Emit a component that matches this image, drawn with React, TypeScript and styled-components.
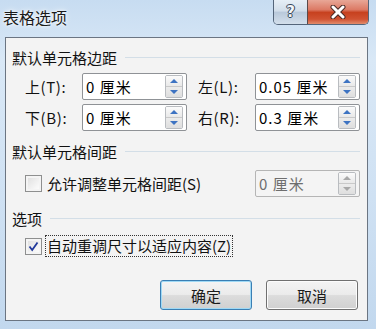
import styled, { createGlobalStyle } from 'styled-components';

const GlobalStyle = createGlobalStyle`
  html, body {
    margin: 0;
    padding: 0;
  }
  body {
    font-family: "Noto Sans CJK SC", "Noto Sans", sans-serif;
    background: #cfe0f2;
  }
`;

// ウィンドウ枠
const Window = styled.div`
  width: 376px;
  height: 329px;
  box-sizing: border-box;
  display: flex;
  flex-direction: column;
  background: linear-gradient(180deg, #c7dcf1 0%, #d9e8f6 18%, #cfe1f3 60%, #c2d8ee 100%);
`;

const TitleBar = styled.div`
  height: 37px;
  display: flex;
  align-items: flex-start;
  justify-content: space-between;
  padding-left: 3px;
  padding-right: 7px;
`;

const Title = styled.div`
  font-size: 16px;
  line-height: 34px;
  color: #1a1a1a;
  text-shadow: 0 0 6px rgba(255, 255, 255, 0.95), 0 0 3px #fff;
`;

const Caption = styled.div`
  display: flex;
  height: 25px;
  border: 1px solid #54657a;
  border-top: none;
  border-radius: 0 0 5px 5px;
  overflow: hidden;
  box-sizing: border-box;
`;

const CapButton = styled.div<{ close?: boolean }>`
  width: ${({ close }) => (close ? '60px' : '33px')};
  display: flex;
  align-items: center;
  justify-content: center;
  border-left: ${({ close }) => (close ? '1px solid #5a4a4a' : 'none')};
  background: ${({ close }) =>
    close
      ? 'linear-gradient(180deg, #e8a797 0%, #dc7a65 40%, #c7411f 52%, #d05232 80%, #e28c6c 100%)'
      : 'linear-gradient(180deg, #e6eef6 0%, #d2deea 45%, #b9c9db 52%, #d3dfeb 100%)'};
`;

const HelpGlyph = styled.span`
  font-family: "DejaVu Sans", sans-serif;
  font-weight: bold;
  font-size: 15px;
  line-height: 1;
  color: #f3f6fa;
  text-shadow: 0 0 1px #2d3b4c, 1px 0 0 #3a4a5d, -1px 0 0 #3a4a5d, 0 1px 0 #3a4a5d, 0 -1px 0 #3a4a5d;
`;

// クライアント領域
const Client = styled.div`
  margin: 0 8px 0 5px;
  height: 284px;
  box-sizing: border-box;
  border: 1px solid #6b7582;
  background: #f3f3f3;
  padding: 0 7px 0 6px;
  display: flex;
  flex-direction: column;
`;

const SectionHead = styled.div<{ top: number }>`
  margin-top: ${({ top }) => top}px;
  height: 20px;
  display: flex;
  align-items: center;
  gap: 8px;
  font-size: 15px;
  color: #111;
  &::after {
    content: '';
    flex: 1;
    height: 1px;
    background: #d3dee7;
  }
`;

const Grid = styled.div`
  margin-top: 6px;
  padding-left: 13px;
  display: grid;
  grid-template-columns: 57px 105px 68px 105px;
  grid-auto-rows: 27px;
  row-gap: 4px;
`;

const Label = styled.div<{ right?: boolean }>`
  display: flex;
  align-items: center;
  padding-left: ${({ right }) => (right ? '11px' : '0')};
  font-size: 15px;
  letter-spacing: 0.6px;
  color: #111;
`;

const Field = styled.div<{ disabled?: boolean }>`
  height: 27px;
  box-sizing: border-box;
  border: 1px solid ${({ disabled }) => (disabled ? '#b5b5b5' : '#8f9296')};
  border-radius: 2px;
  background: ${({ disabled }) => (disabled ? '#f4f4f4' : '#fff')};
  display: flex;
  align-items: center;
  padding: 0 3px 0 3px;
`;

const FieldText = styled.span<{ disabled?: boolean }>`
  flex: 1;
  font-size: 15px;
  letter-spacing: 1px;
  color: ${({ disabled }) => (disabled ? '#6e6e6e' : '#000')};
  white-space: pre;
`;

const Spinner = styled.div`
  width: 18px;
  height: 23px;
  box-sizing: border-box;
  border: 1px solid #b9bcc0;
  border-radius: 2px;
  display: flex;
  flex-direction: column;
  overflow: hidden;
`;

const SpinHalf = styled.div<{ up?: boolean }>`
  flex: 1;
  display: flex;
  align-items: center;
  justify-content: center;
  background: ${({ up }) =>
    up ? 'linear-gradient(180deg, #fbfbfb, #e9e9e9)' : 'linear-gradient(180deg, #ececec, #dedede)'};
  border-top: ${({ up }) => (up ? 'none' : '1px solid #c9c9c9')};
`;

const Arrow = styled.div<{ up?: boolean; disabled?: boolean }>`
  width: 0;
  height: 0;
  border-left: 4px solid transparent;
  border-right: 4px solid transparent;
  ${({ up, disabled }) =>
    up
      ? `border-bottom: 4px solid ${disabled ? '#a8a8a8' : '#3d73c2'};`
      : `border-top: 4px solid ${disabled ? '#a8a8a8' : '#3d73c2'};`}
`;

const CheckRow = styled.div`
  margin-top: 9px;
  height: 27px;
  padding-left: 13px;
  display: flex;
  align-items: center;
  justify-content: space-between;
`;

const CheckLeft = styled.div`
  display: flex;
  align-items: center;
  gap: 3px;
`;

const Box = styled.div`
  width: 17px;
  height: 17px;
  box-sizing: border-box;
  border: 1px solid #8e8f8f;
  background: linear-gradient(135deg, #dcdcdc 0%, #f6f6f6 70%, #ffffff 100%);
  box-shadow: inset 0 0 0 2px #f4f4f4;
  display: flex;
  align-items: center;
  justify-content: center;
`;

const CheckText = styled.span<{ focus?: boolean }>`
  font-size: 15px;
  color: #111;
  line-height: 20px;
  padding: 0 1px;
  border: 1px ${({ focus }) => (focus ? 'dotted #333' : 'solid transparent')};
`;

const Check2Row = styled(CheckRow)`
  margin-top: 7px;
  height: 22px;
`;

const SideField = styled.div`
  width: 105px;
`;

const Buttons = styled.div`
  margin-top: 23px;
  display: flex;
  justify-content: flex-end;
  gap: 14px;
  padding-right: 2px;
`;

const Button = styled.div<{ primary?: boolean }>`
  width: 92px;
  height: 30px;
  box-sizing: border-box;
  border: 1px solid ${({ primary }) => (primary ? '#3a7fb4' : '#707070')};
  border-radius: 3px;
  background: linear-gradient(180deg, #f4f4f4 0%, #ebebeb 48%, #dcdcdc 52%, #d0d0d0 100%);
  box-shadow: ${({ primary }) => (primary ? 'inset 0 0 0 1px #9fd9f5' : 'inset 0 0 0 1px #fcfcfc')};
  display: flex;
  align-items: center;
  justify-content: center;
  font-size: 15px;
  color: #1a1a1a;
`;

const SpinBox = ({ disabled }: { disabled?: boolean }) => (
  <Spinner>
    <SpinHalf up>
      <Arrow up disabled={disabled} />
    </SpinHalf>
    <SpinHalf>
      <Arrow disabled={disabled} />
    </SpinHalf>
  </Spinner>
);

const Input = ({ value, disabled }: { value: string; disabled?: boolean }) => (
  <Field disabled={disabled}>
    <FieldText disabled={disabled}>{value}</FieldText>
    <SpinBox disabled={disabled} />
  </Field>
);

const App = () => {
  return (
    <>
      <GlobalStyle />
      <Window>
        <TitleBar>
          <Title>表格选项</Title>
          <Caption>
            <CapButton>
              <HelpGlyph>?</HelpGlyph>
            </CapButton>
            <CapButton close>
              <svg width="18" height="14" viewBox="0 0 18 14">
                <path d="M4 2 L14 12 M14 2 L4 12" stroke="#4a2a26" strokeWidth="5" strokeLinecap="round" />
                <path d="M4 2 L14 12 M14 2 L4 12" stroke="#ffffff" strokeWidth="3" strokeLinecap="round" />
              </svg>
            </CapButton>
          </Caption>
        </TitleBar>

        <Client>
          <SectionHead top={9}>默认单元格边距</SectionHead>
          <Grid>
            <Label>上(T):</Label>
            <Input value="0 厘米" />
            <Label right>左(L):</Label>
            <Input value="0.05 厘米" />
            <Label>下(B):</Label>
            <Input value="0 厘米" />
            <Label right>右(R):</Label>
            <Input value="0.3 厘米" />
          </Grid>

          <SectionHead top={10}>默认单元格间距</SectionHead>
          <CheckRow>
            <CheckLeft>
              <Box />
              <CheckText>允许调整单元格间距(S)</CheckText>
            </CheckLeft>
            <SideField>
              <Input value="0 厘米" disabled />
            </SideField>
          </CheckRow>

          <SectionHead top={11}>选项</SectionHead>
          <Check2Row>
            <CheckLeft>
              <Box>
                <svg width="11" height="11" viewBox="0 0 11 11">
                  <path d="M1.5 5.5 L4.2 9 L9.5 1.5" fill="none" stroke="#21399b" strokeWidth="1.8" />
                </svg>
              </Box>
              <CheckText focus>自动重调尺寸以适应内容(Z)</CheckText>
            </CheckLeft>
          </Check2Row>

          <Buttons>
            <Button primary>确定</Button>
            <Button>取消</Button>
          </Buttons>
        </Client>
      </Window>
    </>
  );
};

export default App;
